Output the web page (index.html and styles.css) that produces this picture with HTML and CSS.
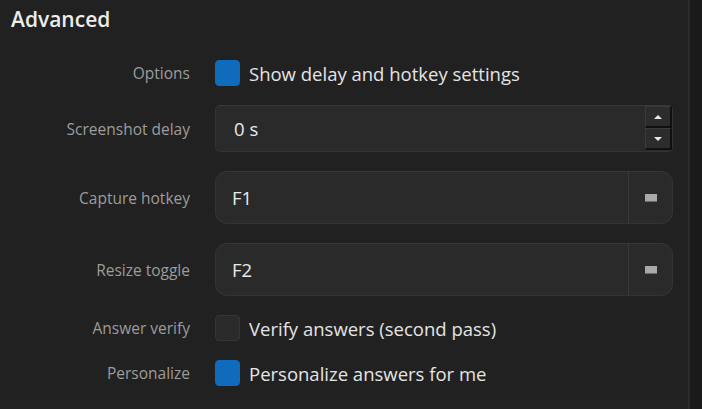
FILE: index.html
```html
<!DOCTYPE html>
<html>
<head>
<meta charset="utf-8">
<link rel="stylesheet" href="styles.css">
</head>
<body>
<div class="page">
  <main class="content">
    <h1 class="title">Advanced</h1>
    <div class="form">
      <div class="label">Options</div>
      <div class="field check-row">
        <span class="box checked"></span>
        <span class="check-text">Show delay and hotkey settings</span>
      </div>

      <div class="label">Screenshot delay</div>
      <div class="field spin">
        <span class="spin-value">0 s</span>
        <div class="spin-buttons">
          <span class="spin-btn"><span class="tri up"></span></span>
          <span class="spin-btn"><span class="tri down"></span></span>
        </div>
      </div>

      <div class="label">Capture hotkey</div>
      <div class="field hotkey">
        <span class="hotkey-value">F1</span>
        <span class="hotkey-btn"><span class="clear-icon"></span></span>
      </div>

      <div class="label">Resize toggle</div>
      <div class="field hotkey">
        <span class="hotkey-value">F2</span>
        <span class="hotkey-btn"><span class="clear-icon"></span></span>
      </div>

      <div class="label">Answer verify</div>
      <div class="field check-row">
        <span class="box"></span>
        <span class="check-text">Verify answers (second pass)</span>
      </div>

      <div class="label">Personalize</div>
      <div class="field check-row">
        <span class="box checked"></span>
        <span class="check-text">Personalize answers for me</span>
      </div>
    </div>
  </main>
  <aside class="scroll-strip"></aside>
</div>
</body>
</html>
```

FILE: styles.css
```css
html, body {
  margin: 0;
  padding: 0;
  height: 100%;
  background: #202020;
}

body {
  font-family: "Open Sans", "Noto Sans", sans-serif;
  color: #e6e6e6;
  overflow: hidden;
}

.page {
  display: flex;
  height: 409px;
}

.content {
  flex: 1;
  background: #212121;
}

.scroll-strip {
  width: 12px;
  border-left: 2px solid #2b2b2b;
  background: #1a1a1a;
}

.title {
  margin: 0;
  padding: 5px 0 0 11px;
  font-size: 21px;
  font-weight: 600;
  line-height: 29px;
  color: #ececec;
}

.form {
  display: grid;
  grid-template-columns: 190px 458px;
  grid-auto-rows: auto;
  column-gap: 25px;
  row-gap: 19px;
  margin-top: 26px;
}

.label {
  display: flex;
  align-items: center;
  justify-content: flex-end;
  font-size: 15.5px;
  color: #9c9c9c;
}

.field {
  box-sizing: border-box;
}

.check-row {
  display: flex;
  align-items: center;
  height: 26px;
  gap: 9px;
}

.box {
  box-sizing: border-box;
  width: 25px;
  height: 26px;
  border-radius: 4px;
  background: #2a2a2a;
  border: 1px solid #353535;
}

.box.checked {
  background: #0f6cbd;
  border-color: #0f6cbd;
}

.check-text {
  font-size: 18.5px;
  color: #e4e4e4;
}

.spin {
  display: flex;
  align-items: center;
  justify-content: space-between;
  height: 47px;
  background: #2a2a2a;
  border: 1px solid #333;
  border-top-color: #383838;
  border-radius: 5px;
  padding-left: 18px;
}

.spin-value,
.hotkey-value {
  font-size: 18.5px;
  color: #eaeaea;
}

.spin-buttons {
  display: flex;
  flex-direction: column;
  align-self: stretch;
  justify-content: space-between;
  padding: 0 0 1px 0;
}

.spin-btn {
  box-sizing: border-box;
  display: flex;
  align-items: center;
  justify-content: center;
  width: 27px;
  height: 23px;
  background: #2c2c2c;
  border-left: 1px solid #3a3a3a;
  border-top: 1px solid #3a3a3a;
  border-right: 2px solid #101010;
  border-bottom: 2px solid #101010;
}

.tri {
  width: 0;
  height: 0;
  border-left: 4px solid transparent;
  border-right: 4px solid transparent;
}

.tri.up {
  border-bottom: 4px solid #e8e8e8;
}

.tri.down {
  border-top: 4px solid #e8e8e8;
}

.hotkey {
  display: flex;
  align-items: stretch;
  height: 53px;
  background: #2a2a2a;
  border: 1px solid #333;
  border-top-color: #373737;
  border-radius: 12px;
}

.hotkey-value {
  flex: 1;
  display: flex;
  align-items: center;
  padding-left: 16px;
}

.hotkey-btn {
  width: 43px;
  display: flex;
  align-items: center;
  justify-content: center;
  border-left: 1px solid #383838;
}

.clear-icon {
  width: 12px;
  height: 7px;
  background: #a9a9a9;
  border-bottom: 1px solid #6c6c6c;
}
```
